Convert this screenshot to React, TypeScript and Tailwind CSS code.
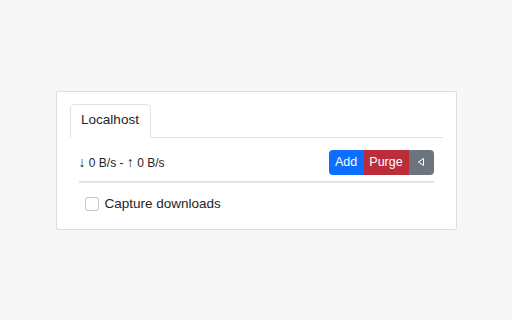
import React from 'react';

const App = () => {
	return (
		<div className="w-[512px] h-[320px] bg-[#f7f7f7] flex items-center justify-center font-['Liberation_Sans',Arial,sans-serif]">
			<div className="w-[401px] h-[139px] bg-white border border-[#dedede] rounded-[2px] px-[13px] pt-[12px]">
				{/* tabs */}
				<div className="flex border-b border-[#dee2e6]">
					<div className="h-[34px] w-[81px] -mb-px flex items-center justify-center border border-[#dee2e6] border-b-white bg-white rounded-t-[5px] text-[13.5px] text-[#212529]">
						Localhost
					</div>
				</div>

				<div className="px-[9px]">
					<div className="flex items-center justify-between pt-[12px] pb-[6px]">
						<span className="text-[12px] text-[#212529]">
							<span className="text-[14px]">↓</span> 0 B/s - <span className="text-[14px]">↑</span> 0 B/s
						</span>
						<div className="flex h-[25px] rounded-[4px] overflow-hidden text-[12.5px] text-white">
							<button className="w-[35px] bg-[#0d6efd]">Add</button>
							<button className="w-[45px] bg-[#bb2d3b]">Purge</button>
							<button className="w-[25px] bg-[#6c757d] flex items-center justify-center">
								<svg width="8" height="10" viewBox="0 0 8 10" fill="none" stroke="white" strokeWidth="1">
									<path d="M6.5 1.5 L1.5 5 L6.5 8.5 Z" strokeLinejoin="round" />
								</svg>
							</button>
						</div>
					</div>
					<div className="h-[2px] bg-[#e3e3e3]" />
					<label className="flex items-center gap-[6px] mt-[11px] pl-[6px] text-[13.5px] text-[#212529]">
						<span className="w-[14px] h-[14px] border border-[#c4c8cc] rounded-[3px] bg-white" />
						Capture downloads
					</label>
				</div>
			</div>
		</div>
	);
};

export default App;
